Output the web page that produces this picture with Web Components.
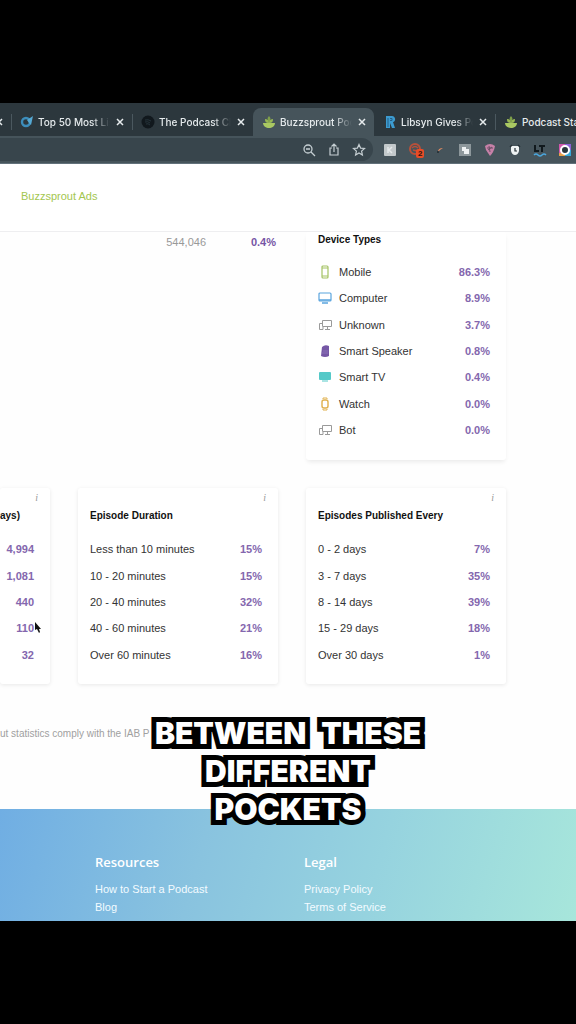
<!DOCTYPE html>
<html lang="en">
<head>
<meta charset="utf-8">
<title>Buzzsprout Podcast Stats</title>
<style>
  body { margin: 0; background: #000; font-family: "Liberation Sans", Arial, sans-serif; font-size: 11px; line-height: 16px; color: #333; }
</style>
</head>
<body>
<stats-video></stats-video>
<script>
const define = (name, html, setup) => {
  const template = document.createElement('template');
  template.innerHTML = html;
  customElements.define(name, class extends HTMLElement {
    constructor() {
      super();
      this.attachShadow({ mode: 'open' }).append(template.content.cloneNode(true));
    }
    connectedCallback() {
      if (setup && !this.ready) { this.ready = true; setup(this, this.shadowRoot); }
    }
  });
};

const ICONS = {
  sprout: '<path d="M7 1C9 3 9 5 7 7 5 5 5 3 7 1Z" fill="#7fa04a"/><path d="M3 4c2 0 4 1 4 4-3 0-4-1-4-4Zm8 0c-2 0-4 1-4 4 3 0 4-1 4-4Z" fill="#97b653"/><path d="M1 8h12c0 3-3 5-6 5S1 11 1 8Z" fill="#a9c862"/>',
  ring: '<circle cx="6" cy="7" r="4" fill="none" stroke="#3c8dbb" stroke-width="2.4"/><path d="M7 5 13 1 11 10 9 8Z" fill="#55a9d4"/>',
  disc: '<circle cx="7" cy="7" r="6.5" fill="#11181d"/><path d="M4 5q3-1 6 1M4 7q3-1 5 1M5 9q2-1 4 1" stroke="#26343b" fill="none"/>',
  libsyn: '<path d="M3 1h6c4 0 4 6 1 6l2 6H9L7 8v5H3Z" fill="#3c9bd0"/><path d="M5 3v9M7 3.500h2v2H7" stroke="#255f87" fill="none"/>',
  zoom: '<circle cx="6" cy="6" r="4" fill="none" stroke="#c5ced2" stroke-width="1.300"/><path d="m9 9 4 4M4 6h4" stroke="#c5ced2" stroke-width="1.300"/>',
  share: '<path d="M5 5H3v7h8V5H9M7 9V1M4.500 3.500 7 1l2.500 2.500" fill="none" stroke="#c5ced2" stroke-width="1.200"/>',
  star: '<path d="m7 1.500 1.600 3.600 3.900.4-2.900 2.600.8 3.900L7 10l-3.400 2 .8-3.900-2.900-2.600 3.900-.4Z" fill="none" stroke="#c5ced2" stroke-width="1.200"/>',
  note: '<rect x="1" y="1" width="12" height="12" rx="1" fill="#c3c9cb"/><path d="M5 4v6M9 4 6 7l3 3" stroke="#e5e9ea" stroke-width="1.500" fill="none"/>',
  swirl: '<circle cx="7" cy="6" r="5" fill="none" stroke="#b8503a" stroke-width="2"/><path d="M4 5q3-3 6 0M5 7l4 1" stroke="#b8503a" fill="none" stroke-width="1.500"/>',
  spark: '<path d="M5 9q0-4 5-4L7 7Z" fill="#e08b62"/><circle cx="5" cy="9" r="1" fill="#222b30"/>',
  pages: '<rect x="1" y="1" width="12" height="12" fill="#8d979b"/><path d="M4 4h4v2h3v5H6V8H4Z" fill="#eef1f2"/>',
  pin: '<path d="M2 3q5-4 10 0-1 6-5 10L3 7Z" fill="#c781a8"/><path d="M4 5h6M6 3l1 6M5 7l4-3" stroke="#6d4f67" fill="none"/>',
  clock: '<path d="M3 3h8v5q-1 4-4 4T3 8Z" fill="#eef2f3"/><path d="M7 5v3h2" stroke="#273137" stroke-width="1.200" fill="none"/><path d="m2 4 2-2m6 0 2 2" stroke="#273137" stroke-width="1.500"/>',
  lt: '<path d="M2 2v6h4M6 3h6M9 3v6" stroke="#11191d" stroke-width="2" fill="none"/><path d="M1 12q2-2 4 0t4 0 4 0" stroke="#4aa7de" stroke-width="1.500" fill="none"/>',
  cam: '<path d="M1 1h6v12H1Z" fill="#d158ad"/><path d="M7 1h6v6H7Z" fill="#8d63d6"/><path d="M7 7h6v6H7Z" fill="#37a9db"/><path d="M1 10h6v3H1Z" fill="#e9a14b"/><circle cx="7" cy="7" r="4" fill="#28353c" stroke="#fff" stroke-width="2"/>',
  mobile: '<rect x="4" y="1" width="6" height="12" rx="1" fill="none" stroke="#a5c364" stroke-width="1.200"/><path d="M4 3h6M4 11h6" stroke="#a5c364"/>',
  computer: '<rect x="1" y="2" width="12" height="8" rx="1" fill="none" stroke="#5ba5de" stroke-width="1.200"/><path d="M1 9h12M4 12h6" stroke="#5ba5de" stroke-width="1.500"/>',
  unknown: '<path d="M4.500 2.500h9v6h-9ZM7 11.500h5M9.500 9v2M4 5.500H1.500v6H5V9" fill="none" stroke="#9a9a9a"/>',
  speaker: '<path d="M4 3q3-3 7-1v10q-4 2-8 0Z" fill="#7557a5"/><path d="M5 7h5M4 9h6" stroke="#9c83c2" stroke-width=".6"/>',
  tv: '<rect x="1" y="2" width="12" height="8" rx="1" fill="#55c9c8"/><path d="M4 11h6" stroke="#55c9c8"/>',
  watch: '<rect x="4" y="3" width="6" height="8" rx="2" fill="none" stroke="#e0b04c" stroke-width="1.400"/><path d="M5 2V1h4v1M5 12v1h4v-1" fill="none" stroke="#e0b04c"/>'
};

define('app-icon', `
  <style>:host{display:block;flex:none;width:14px;height:14px} svg{display:block}</style>
  <svg width="14" height="14" viewBox="0 0 14 14" aria-hidden="true"></svg>`,
  (el, root) => { root.querySelector('svg').innerHTML = ICONS[el.getAttribute('name')]; });

define('browser-tab', `
  <style>
    :host{display:flex;flex:none;align-items:center;box-sizing:border-box;width:121px;height:28px;padding:0 6px 0 8px;gap:4px;
      font:500 10px/16px Inter,sans-serif;color:#e6ebed;border-left:1px solid #46535a;border-image:linear-gradient(transparent 25%,#4b585f 25% 75%,transparent 75%) 1}
    :host([plain]){border-color:transparent;border-image:none}
    :host([active]){background:#46545b;border:0;border-radius:8px 8px 0 0;padding-left:9px}
    a{flex:1;min-width:0;overflow:hidden;white-space:nowrap;color:inherit;text-decoration:none;
      -webkit-mask-image:linear-gradient(90deg,#000 75%,transparent 100%);mask-image:linear-gradient(90deg,#000 75%,transparent 100%)}
    :host([last]) a{-webkit-mask-image:none;mask-image:none}
    button{flex:none;width:12px;height:16px;padding:0;border:0;background:none;color:inherit}
    svg{display:block;margin:auto}
  </style>
  <slot name="icon"></slot><a href="#"><slot></slot></a>
  <button aria-label="Close tab"><svg width="8" height="8"><path d="M1 1l6 6M7 1 1 7" stroke="currentColor" stroke-width="1.500"/></svg></button>`);

define('tab-strip', `
  <style>
    :host{display:flex;align-items:flex-end;overflow:hidden;height:33px;background:#2c373d}
    nav{display:flex;margin-left:-110px}
  </style>
  <nav>
    <browser-tab></browser-tab>
    <browser-tab><app-icon slot="icon" name="ring"></app-icon>Top 50 Most Lis</browser-tab>
    <browser-tab><app-icon slot="icon" name="disc"></app-icon>The Podcast Ch</browser-tab>
    <browser-tab active><app-icon slot="icon" name="sprout"></app-icon>Buzzsprout Poc</browser-tab>
    <browser-tab plain><app-icon slot="icon" name="libsyn"></app-icon>Libsyn Gives Po</browser-tab>
    <browser-tab last><app-icon slot="icon" name="sprout"></app-icon>Podcast Stat</browser-tab>
  </nav>`);

define('tool-bar', `
  <style>
    :host{display:flex;overflow:hidden;height:28px;box-sizing:border-box;padding:2px 0;background:#46545b;border-bottom:1px solid #62717a}
    div{display:flex;align-items:center}
    .address{flex:1;justify-content:flex-end;margin-right:4px;padding-right:2px;border-radius:0 12px 12px 0;background:#38454c}
    .extensions{margin-right:-1px}
    button{position:relative;display:flex;justify-content:center;width:25px;padding:0;border:0;background:none}
    .badge{position:absolute;left:14px;top:6px;padding:0 2px;border-radius:2px;background:#ea4c26;color:#30140e;font:700 8px/9px "Liberation Sans",sans-serif}
  </style>
  <div class="address">
    <button aria-label="Zoom"><app-icon name="zoom"></app-icon></button>
    <button aria-label="Share"><app-icon name="share"></app-icon></button>
    <button aria-label="Bookmark"><app-icon name="star"></app-icon></button>
  </div>
  <div class="extensions">
    <button aria-label="Notes"><app-icon name="note"></app-icon></button>
    <button aria-label="Alerts"><app-icon name="swirl"></app-icon><span class="badge">2</span></button>
    <button aria-label="Spark"><app-icon name="spark"></app-icon></button>
    <button aria-label="Pages"><app-icon name="pages"></app-icon></button>
    <button aria-label="Pin"><app-icon name="pin"></app-icon></button>
    <button aria-label="Timer"><app-icon name="clock"></app-icon></button>
    <button aria-label="Language"><app-icon name="lt"></app-icon></button>
    <button aria-label="Capture"><app-icon name="cam"></app-icon></button>
  </div>`);

define('page-header', `
  <style>
    :host{display:flex;align-items:center;box-sizing:border-box;height:68px;padding:0 21px 4px;background:#fff;border-bottom:1px solid #eeeef0}
    a{color:#a3c64f;text-decoration:none}
  </style>
  <a href="#">Buzzsprout Ads</a>`);

define('stat-card', `
  <style>
    :host{display:block;position:relative;box-sizing:border-box;padding:20px 16px 16px 12px;background:#fff;border-radius:3px;box-shadow:0 1px 4px #00000017}
    :host([joined]){padding-top:0;padding-bottom:17px;box-shadow:0 3px 4px -1px #00000014}
    :host([cropped]){padding-left:0}
    h2{margin:0 0 12px;font-size:10px;line-height:16px;color:#111;white-space:nowrap}
    table{width:100%;height:132px;border-collapse:collapse}
    :host([joined]) h2{margin-bottom:11px}
    :host([joined]) table{height:184px}
    td,th{padding:0;font-weight:400;text-align:left;white-space:nowrap}
    .icon{width:21px}
    .value{text-align:right;font-weight:700;color:#8467ae}
    .info{position:absolute;right:12px;top:2px;padding:0;border:0;background:none;color:#999;font:italic 10px/16px "Liberation Serif",serif}
    :host([joined]) .info{display:none}
  </style>
  <button class="info" aria-label="More information">i</button>
  <h2><slot></slot></h2><table></table>`,
  (el, root) => {
    const table = root.querySelector('table');
    for (const line of el.getAttribute('rows').split(';')) {
      const [label, value, icon] = line.split('|');
      const row = table.insertRow();
      if (icon) {
        const cell = row.insertCell();
        cell.className = 'icon';
        cell.innerHTML = `<app-icon name="${icon}"></app-icon>`;
      }
      if (label) {
        const head = document.createElement('th');
        head.scope = 'row';
        head.textContent = label;
        row.append(head);
      }
      const cell = row.insertCell();
      cell.className = 'value';
      cell.textContent = value;
    }
  });

define('stats-page', `
  <style>
    :host{display:block;background:#fefefe}
    .grid{display:grid;grid-template-columns:50px 1fr 1fr;gap:28px;margin-right:70px;align-items:start}
    .totals{grid-column:1/3;width:100%;border-collapse:collapse;line-height:20px}
    .totals td{padding:0;text-align:right;color:#999}
    .totals .share{width:70px;padding-right:2px;font-weight:700;color:#7655a5}
    .ages{position:relative}
    p{margin:0;padding:42px 0 67px;color:#a0a0a0;font-size:10px;white-space:nowrap}
    .pointer{position:absolute;left:35px;top:134px}
  </style>
  <main>
    <div class="grid">
      <table class="totals"><tr><td>544,046</td><td class="share">0.4%</td></tr></table>
      <stat-card joined rows="Mobile|86.3%|mobile;Computer|8.9%|computer;Unknown|3.7%|unknown;Smart Speaker|0.8%|speaker;Smart TV|0.4%|tv;Watch|0.0%|watch;Bot|0.0%|unknown">Device Types</stat-card>
      <div class="ages">
        <stat-card cropped rows="|4,994;|1,081;|440;|110;|32">ays)</stat-card>
        <svg class="pointer" width="6" height="11" aria-hidden="true"><path d="M0 0v8l2-1 2 4 1-1-1-3h2Z" fill="#111"/></svg>
      </div>
      <stat-card rows="Less than 10 minutes|15%;10 - 20 minutes|15%;20 - 40 minutes|32%;40 - 60 minutes|21%;Over 60 minutes|16%">Episode Duration</stat-card>
      <stat-card rows="0 - 2 days|7%;3 - 7 days|35%;8 - 14 days|39%;15 - 29 days|18%;Over 30 days|1%">Episodes Published Every</stat-card>
    </div>
    <p>ut statistics comply with the IAB P</p>
  </main>`);

define('site-footer', `
  <style>
    :host{display:grid;grid-template-columns:181px 1fr;gap:28px;box-sizing:border-box;height:112px;overflow:hidden;padding:43px 20px 0 95px;
      background:linear-gradient(105deg,#70aee3,#89c3df 35%,#96d3df 65%,#a7e6db);color:#fff}
    h3{margin:0 0 8px;font:600 13px/20px "Open Sans",sans-serif}
    a{display:block;line-height:18px;color:#f3fbff;text-decoration:none;white-space:nowrap}
  </style>
  <section><h3>Resources</h3><a href="#">How to Start a Podcast</a><a href="#">Blog</a></section>
  <section><h3>Legal</h3><a href="#">Privacy Policy</a><a href="#">Terms of Service</a></section>`);

define('video-caption', `
  <style>
    :host{display:flex;flex-wrap:wrap;justify-content:center;column-gap:15px;max-width:280px;margin:auto;
      font:900 30px/38px Inter,sans-serif;color:#fff}
    span{-webkit-text-stroke:10px #000;paint-order:stroke fill;text-shadow:0 1px 2px #000}
  </style><span>BETWEEN</span><span>THESE</span><span>DIFFERENT</span><span>POCKETS</span>`);

define('stats-video', `
  <style>
    :host{display:block;padding:103px 0}
    .frame{position:relative;overflow:hidden}
    video-caption{position:absolute;left:0;right:0;bottom:93px}
  </style>
  <div class="frame">
    <tab-strip></tab-strip><tool-bar></tool-bar><page-header></page-header>
    <stats-page></stats-page><site-footer></site-footer>
    <video-caption></video-caption>
  </div>`);
</script>
</body>
</html>
